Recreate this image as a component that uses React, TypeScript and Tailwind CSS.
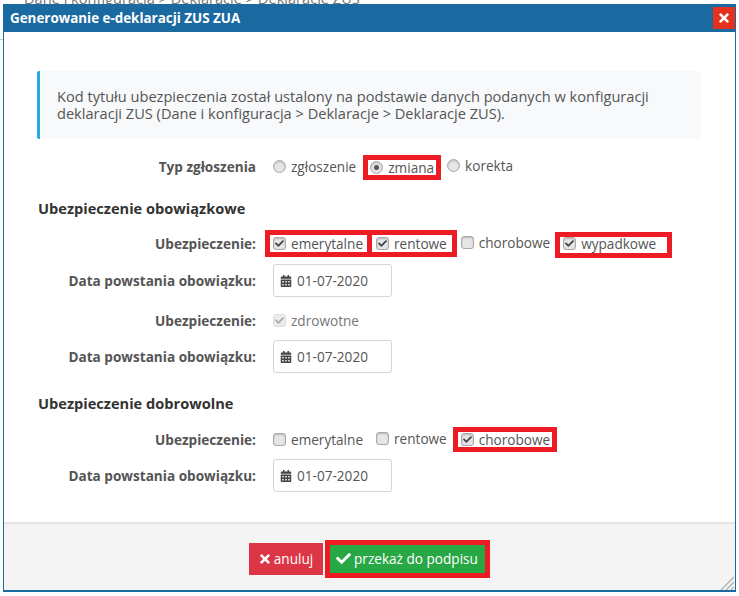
import React from 'react';
import { FaCalendarAlt, FaCheck, FaTimes } from 'react-icons/fa';

function Highlight({ children, className }: { children: React.ReactNode; className: string }) {
  return (
    <span className="relative inline-flex items-center">
      {children}
      <span className={`absolute border-[5px] border-[#ed1c24] ${className}`}></span>
    </span>
  );
}

function Radio({ checked, label }: { checked?: boolean; label: string }) {
  return (
    <span className="inline-flex items-center">
      <span className="w-[13px] h-[13px] rounded-full border border-[#a9a9a9] bg-[#e6e6e6] shadow-[inset_0_1px_2px_rgba(0,0,0,0.2)] flex items-center justify-center mr-[5px]">
        {checked && <span className="w-[5px] h-[5px] rounded-full bg-[#555]"></span>}
      </span>
      <span>{label}</span>
    </span>
  );
}

function Checkbox({ checked, disabled, label }: { checked?: boolean; disabled?: boolean; label: string }) {
  return (
    <span className={`inline-flex items-center ${disabled ? 'text-[#777]' : ''}`}>
      <span className={`w-[13px] h-[13px] rounded-[3px] border flex items-center justify-center mr-[5px] ${disabled ? 'border-[#dcdcdc] bg-[#ececec]' : 'border-[#a9a9a9] bg-[#e6e6e6] shadow-[inset_0_1px_2px_rgba(0,0,0,0.2)]'}`}>
        {checked && <FaCheck size={9} className={disabled ? 'text-[#aaa]' : 'text-[#444]'} />}
      </span>
      <span>{label}</span>
    </span>
  );
}

function FormRow({ label, children, className }: { label: string; children: React.ReactNode; className?: string }) {
  return (
    <div className={`flex items-center ${className ?? ''}`}>
      <div className="w-[219px] text-right font-bold text-[#555] shrink-0">{label}</div>
      <div className="ml-[17px] flex items-center">{children}</div>
    </div>
  );
}

function DateField() {
  return (
    <div className="w-[119px] h-[33px] border border-[#d5d5d5] rounded-[3px] flex items-center pl-[6px] text-[#555]">
      <FaCalendarAlt size={12} className="text-[#444] mr-[5px]" />
      <span>01-07-2020</span>
    </div>
  );
}

export default function App() {
  return (
    <div className="relative w-[739px] h-[596px] bg-white overflow-hidden pt-[4px] pl-[3px] text-[13.6px] leading-[17px] text-[#555]" style={{ fontFamily: '"Open Sans", sans-serif' }}>
      <div className="absolute top-[-10px] left-[24px] text-[14.6px] text-[#777] whitespace-nowrap">Dane i konfiguracja &gt; Deklaracje &gt; Deklaracje ZUS</div>
      <div className="absolute top-[39px] left-0 w-[3px] h-px bg-[#ccc]"></div>
      <div className="relative w-[733px] h-[588px] border-x border-b-2 border-[#1a6aa1] bg-white flex flex-col">
        <div className="h-[28px] bg-[#1a6aa1] flex items-center justify-between pl-[7px] pr-[1px] shrink-0 -mx-px">
          <h1 className="font-bold text-white text-[13.4px]">Generowanie e-deklaracji ZUS ZUA</h1>
          <button className="w-[22px] h-[22px] bg-[#e4321f] flex items-center justify-center">
            <FaTimes size={14} className="text-white" />
          </button>
        </div>

        <div className="flex-1 pl-[33px] pr-[33px] pt-[39px]">
          <div className="h-[68px] border-l-[3px] border-[#29a8e0] bg-[#f7f9fb] rounded-[2px] pl-[17px] flex items-center text-[#555] text-[14.6px] w-[664px]">
            <p>
              Kod tytułu ubezpieczenia został ustalony na podstawie danych podanych w konfiguracji
              <br />
              deklaracji ZUS (Dane i konfiguracja &gt; Deklaracje &gt; Deklaracje ZUS).
            </p>
          </div>

          <FormRow label="Typ zgłoszenia" className="mt-[18px] h-[18px]">
            <Radio label="zgłoszenie" />
            <span className="ml-[14px]">
              <Highlight className="-top-[4px] -bottom-[4px] -left-[7px] -right-[7px]">
                <Radio checked label="zmiana" />
              </Highlight>
            </span>
            <span className="ml-[13px]">
              <Radio label="korekta" />
            </span>
          </FormRow>

          <h2 className="mt-[25px] ml-px h-[18px] font-bold text-[#333] text-[14.6px]">Ubezpieczenie obowiązkowe</h2>

          <FormRow label="Ubezpieczenie:" className="mt-[16px] h-[18px]">
            <Highlight className="-top-[5px] -bottom-[5px] -left-[8px] -right-[9px]">
              <Checkbox checked label="emerytalne" />
            </Highlight>
            <span className="ml-[13px]">
              <Highlight className="-top-[5px] -bottom-[5px] -left-[9px] -right-[10px]">
                <Checkbox checked label="rentowe" />
              </Highlight>
            </span>
            <span className="ml-[14px]">
              <Checkbox label="chorobowe" />
            </span>
            <span className="ml-[13px]">
              <Highlight className="-top-[3px] -bottom-[6px] -left-[8px] -right-[16px]">
                <Checkbox checked label="wypadkowe" />
              </Highlight>
            </span>
          </FormRow>

          <FormRow label="Data powstania obowiązku:" className="mt-[12px]">
            <DateField />
          </FormRow>

          <FormRow label="Ubezpieczenie:" className="mt-[14px] h-[18px]">
            <Checkbox checked disabled label="zdrowotne" />
          </FormRow>

          <FormRow label="Data powstania obowiązku:" className="mt-[11px]">
            <DateField />
          </FormRow>

          <h2 className="mt-[22px] ml-px h-[18px] font-bold text-[#333] text-[14.6px]">Ubezpieczenie dobrowolne</h2>

          <FormRow label="Ubezpieczenie:" className="mt-[17px] h-[18px]">
            <Checkbox label="emerytalne" />
            <span className="ml-[13px]">
              <Checkbox label="rentowe" />
            </span>
            <span className="ml-[14px]">
              <Highlight className="-top-[4px] -bottom-[4px] -left-[8px] -right-[7px]">
                <Checkbox checked label="chorobowe" />
              </Highlight>
            </span>
          </FormRow>

          <FormRow label="Data powstania obowiązku:" className="mt-[11px]">
            <DateField />
          </FormRow>
        </div>

        <div className="h-[68px] bg-[#f4f4f4] border-t-2 border-[#e5e5e5] flex items-center justify-center shrink-0 pt-[3px] pr-[6px]">
          <button className="h-[32px] w-[74px] bg-[#dc3545] text-white flex items-center justify-center">
            <FaTimes size={14} className="mr-[2px]" />
            anuluj
          </button>
          <span className="ml-[7px]">
            <Highlight className="-inset-[5px]">
              <button className="h-[28px] w-[155px] bg-[#28a745] text-white flex items-center justify-center">
                <FaCheck size={15} className="mr-[3px]" />
                przekaż do podpisu
              </button>
            </Highlight>
          </span>
        </div>

        <svg viewBox="0 0 14 14" className="absolute right-[1px] bottom-0 w-[14px] h-[14px]">
          <path d="M1 14 L14 1 M6 14 L14 6 M11 14 L14 11" stroke="#aaa" strokeWidth="1.2" fill="none" />
        </svg>
      </div>
    </div>
  );
}
